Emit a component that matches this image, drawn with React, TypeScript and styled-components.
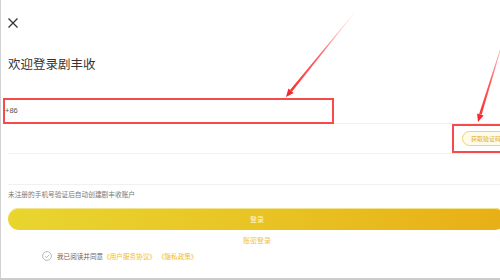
import React from "react";
import styled, { createGlobalStyle } from "styled-components";

const GlobalStyle = createGlobalStyle`
  html, body {
    margin: 0;
    padding: 0;
    background: #ffffff;
  }
  body {
    font-family: "Noto Sans CJK SC", "Noto Sans", sans-serif;
  }
`;

type Point = [number, number];

// tapered arrow polygon from start to tip
const arrowShapes = (from: Point, tip: Point) => {
  const dx = tip[0] - from[0];
  const dy = tip[1] - from[1];
  const len = Math.hypot(dx, dy);
  const ux = dx / len;
  const uy = dy / len;
  const nx = -uy;
  const ny = ux;
  const headLen = 8;
  const bx = tip[0] - ux * headLen;
  const by = tip[1] - uy * headLen;
  const p = (x: number, y: number) => `${x.toFixed(1)},${y.toFixed(1)}`;
  const shaft = [
    p(from[0] + nx * 0.2, from[1] + ny * 0.2),
    p(bx + nx * 1.3, by + ny * 1.3),
    p(bx - nx * 1.3, by - ny * 1.3),
    p(from[0] - nx * 0.2, from[1] - ny * 0.2),
  ].join(" ");
  const head = [
    p(tip[0], tip[1]),
    p(bx + nx * 3.4, by + ny * 3.4),
    p(bx - nx * 3.4, by - ny * 3.4),
  ].join(" ");
  return { shaft, head };
};

const ARROWS: { from: Point; tip: Point }[] = [
  { from: [355, 12], tip: [286, 97] },
  { from: [504, 38], tip: [478, 122] },
];

export default function App() {
  return (
    <React.Fragment>
      <GlobalStyle />
      <Frame>
        <Page>
          <CloseIcon viewBox="0 0 10 10">
            <path d="M0.5 0.5 L9.5 9.5 M9.5 0.5 L0.5 9.5" />
          </CloseIcon>
          <Title>{"欢迎登录剧丰收"}</Title>

          <Form>
            <FieldRow height={26}>
              <AreaCode>{"+86"}</AreaCode>
            </FieldRow>
            <FieldRow height={30} alignEnd>
              <CodeButton>{"获取验证码"}</CodeButton>
            </FieldRow>
            <FieldRow height={31} />
          </Form>

          <Hint>{"未注册的手机号验证后自动创建剧丰收账户"}</Hint>

          <LoginButton>{"登录"}</LoginButton>
          <SwitchLink>{"账密登录"}</SwitchLink>

          <AgreementRow>
            <CheckCircle viewBox="0 0 10 10">
              <circle cx="5" cy="5" r="4.4" />
              <path d="M3 5.2 L4.5 6.6 L7.1 3.8" />
            </CheckCircle>
            <AgreementText>{"我已阅读并同意"}</AgreementText>
            <AgreementLink>{"《用户服务协议》"}</AgreementLink>
            <AgreementLink>{"《隐私政策》"}</AgreementLink>
          </AgreementRow>
        </Page>

        <RedBox style={{ left: 2, top: 98, width: 331, height: 26 }} />
        <RedBox style={{ left: 451, top: 124, width: 60, height: 29 }} />

        <ArrowLayer viewBox="0 0 500 280">
          <defs>
            <linearGradient id="fade1" x1="355" y1="12" x2="286" y2="97" gradientUnits="userSpaceOnUse">
              <stop offset="0" stopColor="#ff8080" stopOpacity="0.15" />
              <stop offset="0.5" stopColor="#ff4040" stopOpacity="0.8" />
              <stop offset="1" stopColor="#f42a2a" />
            </linearGradient>
            <linearGradient id="fade2" x1="504" y1="38" x2="478" y2="122" gradientUnits="userSpaceOnUse">
              <stop offset="0" stopColor="#ff8080" stopOpacity="0.3" />
              <stop offset="0.5" stopColor="#ff4040" stopOpacity="0.85" />
              <stop offset="1" stopColor="#f42a2a" />
            </linearGradient>
          </defs>
          {ARROWS.map((a, i) => {
            const s = arrowShapes(a.from, a.tip);
            return (
              <g key={i}>
                <polygon points={s.shaft} fill={`url(#fade${i + 1})`} />
                <polygon points={s.head} fill="#f42a2a" />
              </g>
            );
          })}
        </ArrowLayer>
      </Frame>
    </React.Fragment>
  );
}

const Frame = styled.div`
  position: relative;
  width: 500px;
  height: 280px;
  box-sizing: border-box;
  overflow: hidden;
  background: #ffffff;
  border-left: 1px solid #d0d0d0;
  border-bottom: 2px solid #cccccc;
`;

const Page = styled.div`
  width: 513px;
  box-sizing: border-box;
  padding: 18px 8px 0 7px;
  display: flex;
  flex-direction: column;
`;

const CloseIcon = styled.svg`
  width: 10px;
  height: 10px;
  fill: none;
  stroke: #333333;
  stroke-width: 1.3;
`;

const Title = styled.div`
  margin-top: 29px;
  font-size: 12.5px;
  line-height: 14px;
  color: #333333;
`;

const Form = styled.div`
  margin-top: 27px;
  display: flex;
  flex-direction: column;
`;

const FieldRow = styled.div<{ height: number; alignEnd?: boolean }>`
  height: ${(p) => p.height}px;
  box-sizing: border-box;
  border-bottom: 1px solid #f1f1f1;
  display: flex;
  align-items: center;
  justify-content: ${(p) => (p.alignEnd ? "flex-end" : "flex-start")};
`;

const AreaCode = styled.span`
  font-family: "Liberation Sans", "Noto Sans", sans-serif;
  font-size: 7.5px;
  color: #555555;
  margin-left: -3px;
`;

const CodeButton = styled.div`
  height: 15px;
  box-sizing: border-box;
  padding: 0 8px;
  margin-right: -4px;
  border: 1px solid #f1d46a;
  border-radius: 8px;
  background: #fffbea;
  color: #e2ad2a;
  font-size: 6px;
  line-height: 13px;
  white-space: nowrap;
`;

const Hint = styled.div`
  margin-top: 4px;
  font-size: 6.7px;
  line-height: 10px;
  color: #777777;
`;

const LoginButton = styled.div`
  margin-top: 9px;
  height: 22px;
  border-radius: 11px;
  background: linear-gradient(90deg, #e9d52f 0%, #e8c424 50%, #e8af16 100%);
  box-shadow: inset 0 1px 0 #f3e590;
  display: flex;
  align-items: center;
  justify-content: center;
  font-size: 7px;
  color: #fff6d6;
`;

const SwitchLink = styled.div`
  margin-top: 5px;
  font-size: 7px;
  line-height: 10px;
  color: #efc24e;
  text-align: center;
`;

const AgreementRow = styled.div`
  margin-top: 6px;
  padding-left: 34px;
  display: flex;
  align-items: center;
  height: 10px;
  font-size: 6.6px;
`;

const CheckCircle = styled.svg`
  width: 10px;
  height: 10px;
  margin-right: 5px;
  fill: none;
  stroke: #a8a8a8;
  stroke-width: 0.8;
`;

const AgreementText = styled.span`
  color: #666666;
`;

const AgreementLink = styled.span`
  color: #f0bb2c;
  margin-right: 2px;
`;

const RedBox = styled.div`
  position: absolute;
  box-sizing: border-box;
  border: 2px solid #f74b4b;
  pointer-events: none;
`;

const ArrowLayer = styled.svg`
  position: absolute;
  left: -1px;
  top: 0;
  width: 500px;
  height: 280px;
  pointer-events: none;
`;
